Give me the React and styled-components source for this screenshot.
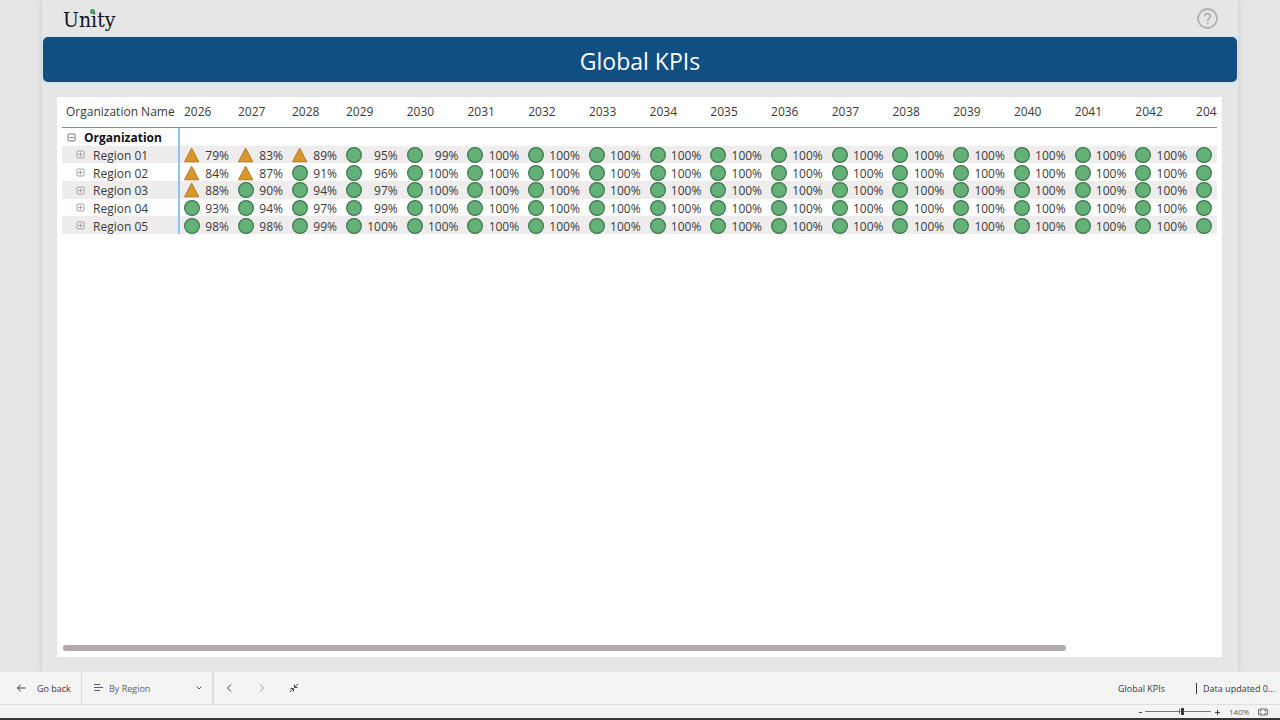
import React from "react";
import styled, { createGlobalStyle } from "styled-components";

const GlobalStyle = createGlobalStyle`
  *, *::before, *::after { box-sizing: border-box; }
  body {
    margin: 0;
    background: #e5e5e5;
    color: #3b3a39;
    font-family: "Open Sans", "Noto Sans", sans-serif;
    font-size: 12px;
  }
  button, select, input { font: inherit; color: inherit; margin: 0; }
`;

const Page = styled.div`
  min-height: 100vh;
  display: flex;
  flex-direction: column;
`;

const Report = styled.main`
  flex: 1;
  display: flex;
  flex-direction: column;
  margin: 0 42px;
  background: #e6e6e6;
  box-shadow: 0 0 6px rgba(0, 0, 0, 0.12);
`;

const TopBar = styled.header`
  height: 37px;
  display: flex;
  align-items: center;
  justify-content: space-between;
  padding: 0 19px 0 21px;
`;

const Logo = styled.div`
  position: relative;
  padding-top: 2px;
  font-family: "DejaVu Serif Condensed", "DejaVu Serif", serif;
  font-stretch: condensed;
  font-size: 21px;
  line-height: 26px;
  color: #111;
`;

const LogoDot = styled.span`
  position: absolute;
  top: 4px;
  left: 27px;
  width: 5px;
  height: 5px;
  border-radius: 50%;
  background: #4f9a6c;
`;

const IconButton = styled.button`
  display: flex;
  align-items: center;
  justify-content: center;
  flex-shrink: 0;
  width: ${(p) => p.$width || 32}px;
  height: ${(p) => p.$height || 32}px;
  padding: 0;
  border: 0;
  background: none;
  color: ${(p) => p.$color || "#484644"};
`;

const Banner = styled.h1`
  height: 45px;
  margin: 0 1px;
  border-radius: 5px;
  background: #114e82;
  box-shadow: 0 0 1px 1px #d3e0ec;
  color: #fff;
  font-size: 23px;
  font-weight: 400;
  line-height: 49px;
  text-align: center;
`;

const Card = styled.section`
  flex: 1;
  display: flex;
  flex-direction: column;
  justify-content: space-between;
  margin: 15px 16px 15px 15px;
  padding: 0 5px;
  background: #fff;
`;

const Scroller = styled.div`
  overflow-x: auto;
  scrollbar-width: none;
`;

const Matrix = styled.table`
  width: 1191px;
  height: 137px;
  table-layout: fixed;
  border-collapse: separate;
  border-spacing: 0;
  line-height: 16px;
`;

const Col = styled.col`
  width: ${(p) => p.$width}px;
`;

const HeadCell = styled.th`
  height: 31px;
  padding: 0 0 0 4px;
  border-bottom: 1px solid #3f9fe0;
  font-weight: 400;
  text-align: left;
  white-space: nowrap;
`;

const Row = styled.tr`
  background: ${(p) => (p.$shaded ? "#eeecec" : "#fff")};
`;

const NameCell = styled.th`
  padding: 1px 0 0 ${(p) => (p.$root ? 5 : 14)}px;
  border-right: 2px solid #8ec5f4;
  font-weight: ${(p) => (p.$root ? 700 : 400)};
  color: ${(p) => (p.$root ? "#111" : "inherit")};
  text-align: left;
  white-space: nowrap;
`;

const NameContent = styled.div`
  display: flex;
  align-items: center;
  gap: 8px;
`;

const ValueCell = styled.td`
  padding: 1px 5px 0 4px;
`;

const Value = styled.div`
  display: flex;
  align-items: center;
  justify-content: space-between;
`;

const CellText = styled.span`
  padding-top: 2px;
  line-height: 14px;
`;

const ScrollTrack = styled.div`
  padding: 0 1px 6px;
`;

const ScrollThumb = styled.div`
  width: 87%;
  height: 6px;
  border-radius: 3px;
  background: #adacaa;
`;

const Toolbar = styled.footer`
  display: flex;
  height: 33px;
  background: #f4f4f4;
  border-bottom: 1px solid #e1dfdd;
  font-size: 9px;
`;

const BackButton = styled.button`
  display: flex;
  align-items: center;
  gap: 11px;
  width: 82px;
  padding: 0 0 0 16px;
  border: 0;
  border-right: 1px solid #d8d8d8;
  background: none;
  white-space: nowrap;
`;

const ViewPicker = styled.label`
  display: flex;
  align-items: center;
  gap: 6px;
  width: 132px;
  padding: 0 9px 0 11px;
  border-right: 2px solid #dedede;
  color: #605e5c;
`;

const ViewSelect = styled.select`
  flex: 1;
  min-width: 0;
  padding: 0;
  border: 0;
  background: none;
  appearance: none;
`;

const Nav = styled.nav`
  display: flex;
  align-items: center;
`;

const Status = styled.div`
  display: flex;
  align-items: center;
  margin-left: auto;
  padding-right: 5px;
  white-space: nowrap;
`;

const PageName = styled.span`
  padding-right: 31px;
`;

const Updated = styled.span`
  padding-left: 6px;
  border-left: 1px solid #3b3a39;
  line-height: 11px;
`;

const ZoomBar = styled.div`
  display: flex;
  align-items: center;
  justify-content: flex-end;
  height: 15px;
  padding-right: 12px;
  background: #f4f4f4;
  border-bottom: 2px solid #3a3538;
  font-size: 8px;
  color: #605e5c;
`;

const ZoomRange = styled.input`
  width: 66px;
  height: 9px;
  appearance: none;
  background: linear-gradient(#777, #777) center / 100% 1px no-repeat,
    linear-gradient(#777, #777) 34px center / 1px 5px no-repeat;

  &::-webkit-slider-thumb {
    appearance: none;
    width: 3px;
    height: 7px;
    background: #3b3a39;
  }
`;

const ZoomLabel = styled.label`
  width: 35px;
  padding-left: 6px;
  line-height: 12px;
`;

const YEARS = Array.from({ length: 18 }, (_, i) => 2026 + i);

const REGIONS = [
  { name: "Region 01", values: [79, 83, 89, 95, 99] },
  { name: "Region 02", values: [84, 87, 91, 96] },
  { name: "Region 03", values: [88, 90, 94, 97] },
  { name: "Region 04", values: [93, 94, 97, 99] },
  { name: "Region 05", values: [98, 98, 99] },
];

function StatusIcon({ value }) {
  return (
    <svg width="16" height="16" viewBox="0 0 16 16" aria-hidden="true">
      {value < 90 ? (
        <path d="M7.6 1.2 14.8 14.8H.5Z" fill="#d9962b" stroke="#b67a22" />
      ) : (
        <circle cx="8" cy="8" r="7.4" fill="#64b177" stroke="#3f7650" strokeWidth="1.2" />
      )}
    </svg>
  );
}

function Expander({ open }) {
  return (
    <IconButton $width={9} $height={9} $color={open ? "#777" : "#a3a3a3"} aria-label={open ? "Collapse" : "Expand"}>
      <svg width="9" height="9" viewBox="0 0 9 9" fill="none" stroke="currentColor">
        <rect x="1" y="1" width="7" height="7" rx="1" />
        <path d={open ? "M2.5 4.5h4" : "M2.5 4.5h4M4.5 2.5v4"} />
      </svg>
    </IconButton>
  );
}

function Stroke({ d, width = 12, height = 12 }) {
  return (
    <svg width={width} height={height} viewBox={`0 0 ${width} ${height}`} fill="none" stroke="currentColor" aria-hidden="true">
      <path d={d} />
    </svg>
  );
}

export default function App() {
  return (
    <Page>
      <GlobalStyle />
      <Report>
        <TopBar>
          <Logo>
            Unity
            <LogoDot />
          </Logo>
          <IconButton $width={22} $height={22} $color="#b1b0b0" aria-label="Help">
            <svg width="22" height="22" viewBox="0 0 22 22" fill="none" stroke="currentColor">
              <circle cx="10.5" cy="10.5" r="9.5" strokeWidth="1.8" />
              <path d="M7.7 8.4C7.7 6.500 8.900 5.600 10.500 5.600s2.900 1 2.900 2.700c0 2-2.800 2.200-2.800 4.600" strokeWidth="1.7" />
              <circle cx="10.6" cy="15.3" r=".7" fill="currentColor" strokeWidth=".6" />
            </svg>
          </IconButton>
        </TopBar>
        <Banner>Global KPIs</Banner>
        <Card>
          <Scroller>
            <Matrix>
              <colgroup>
                <Col $width={118} />
                <Col $width={54} />
                <Col $width={54} />
                <Col $width={54} />
              </colgroup>
              <thead>
                <tr>
                  <HeadCell scope="col">Organization Name</HeadCell>
                  {YEARS.map((year) => (
                    <HeadCell key={year} scope="col">{year}</HeadCell>
                  ))}
                </tr>
              </thead>
              <tbody>
                <Row>
                  <NameCell $root scope="row">
                    <NameContent>
                      <Expander open />
                      <CellText>Organization</CellText>
                    </NameContent>
                  </NameCell>
                  {YEARS.map((year) => (
                    <ValueCell key={year} />
                  ))}
                </Row>
                {REGIONS.map((region, index) => (
                  <Row key={region.name} $shaded={index % 2 === 0}>
                    <NameCell scope="row">
                      <NameContent>
                        <Expander />
                        <CellText>{region.name}</CellText>
                      </NameContent>
                    </NameCell>
                    {YEARS.map((year, i) => {
                      const value = region.values[i] ?? 100;
                      return (
                        <ValueCell key={year}>
                          <Value>
                            <StatusIcon value={value} />
                            <CellText>{value}%</CellText>
                          </Value>
                        </ValueCell>
                      );
                    })}
                  </Row>
                ))}
              </tbody>
            </Matrix>
          </Scroller>
          <ScrollTrack>
            <ScrollThumb />
          </ScrollTrack>
        </Card>
      </Report>
      <Toolbar>
        <BackButton>
          <Stroke width={10} height={10} d="M9.5 5H1.5M4.8 1.5 1.5 5l3.3 3.5" />
          Go back
        </BackButton>
        <ViewPicker>
          <Stroke width={10} height={10} d="M1 1.5h6M1 4.5h9M1 7.5h6" />
          <ViewSelect aria-label="View">
            <option>By Region</option>
          </ViewSelect>
          <Stroke width={8} height={8} d="M1.5 2.5 4 5l2.5-2.5" />
        </ViewPicker>
        <Nav>
          <IconButton aria-label="Previous page">
            <Stroke d="M7 2.5 3.5 6 7 9.5" />
          </IconButton>
          <IconButton $color="#a0a0a0" aria-label="Next page">
            <Stroke d="M4 2.5 7.5 6 4 9.5" />
          </IconButton>
          <IconButton aria-label="Exit full screen">
            <Stroke d="M10 2 7 5M6.500 2.500v3h3M2 10l3-3M2.500 6.500h3v3" />
          </IconButton>
        </Nav>
        <Status>
          <PageName>Global KPIs</PageName>
          <Updated>Data updated 0...</Updated>
        </Status>
      </Toolbar>
      <ZoomBar>
        <IconButton $width={8} $height={12} aria-label="Zoom out">
          <Stroke width={4} height={6} d="M0 3.5h3" />
        </IconButton>
        <ZoomRange id="zoom" type="range" min="10" max="240" defaultValue="140" />
        <IconButton $width={12} $height={12} aria-label="Zoom in">
          <Stroke width={5} height={6} d="M0 3.5h5M2.5 1v5" />
        </IconButton>
        <ZoomLabel htmlFor="zoom">140%</ZoomLabel>
        <IconButton $width={10} $height={12} aria-label="Fit to page">
          <svg width="10" height="8" viewBox="0 0 10 8" fill="none" stroke="currentColor" strokeWidth=".8">
            <rect x=".5" y="1" width="9" height="6" rx="1" />
            <path d="M2.2 3.5v-1h1.5M6.3 2.5h1.5v1M7.8 4.8v1H6.3M3.7 5.8H2.2v-1" />
          </svg>
        </IconButton>
      </ZoomBar>
    </Page>
  );
}
